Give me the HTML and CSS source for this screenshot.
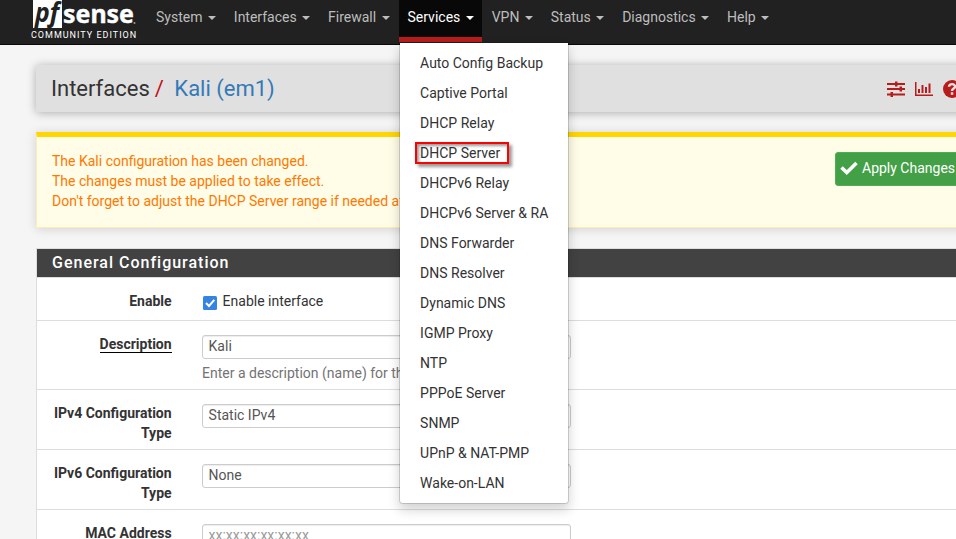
FILE: index.html
```html
<!DOCTYPE html>
<html lang="en">
<head>
<meta charset="utf-8">
<title>pfSense - Interfaces: Kali (em1)</title>
<link rel="stylesheet" href="styles.css">
</head>
<body>
<nav class="navbar">
  <a class="brand">
    <svg class="logo" width="106" height="29" viewBox="0 0 106 29">
      <rect x="2" y="0" width="29" height="28" fill="#fff"/>
      <text class="logo-pf" x="4" y="22" textLength="24" lengthAdjust="spacingAndGlyphs">pf</text>
      <text class="logo-sense" x="32" y="22.5" textLength="71" lengthAdjust="spacingAndGlyphs">sense</text>
      <circle cx="103.500" cy="23" r="1" fill="#999"/>
    </svg>
    <span class="edition">COMMUNITY EDITION</span>
  </a>
  <ul class="menu">
    <li>System <i class="caret"></i></li>
    <li>Interfaces <i class="caret"></i></li>
    <li>Firewall <i class="caret"></i></li>
    <li class="open">Services <i class="caret"></i>
      <ul class="dropdown">
        <li>Auto Config Backup</li>
        <li>Captive Portal</li>
        <li>DHCP Relay</li>
        <li class="marked">DHCP Server</li>
        <li>DHCPv6 Relay</li>
        <li>DHCPv6 Server &amp; RA</li>
        <li>DNS Forwarder</li>
        <li>DNS Resolver</li>
        <li>Dynamic DNS</li>
        <li>IGMP Proxy</li>
        <li>NTP</li>
        <li>PPPoE Server</li>
        <li>SNMP</li>
        <li>UPnP &amp; NAT-PMP</li>
        <li>Wake-on-LAN</li>
      </ul>
    </li>
    <li>VPN <i class="caret"></i></li>
    <li>Status <i class="caret"></i></li>
    <li>Diagnostics <i class="caret"></i></li>
    <li>Help <i class="caret"></i></li>
  </ul>
</nav>
<main class="container">
  <header class="page-header">
    <h1>Interfaces<span class="slash">/</span><a>Kali (em1)</a></h1>
    <div class="tools">
      <svg width="18" height="16" viewBox="0 0 18 16" fill="#b71c1c"><path d="M0 2h18v2H0zM0 7h18v2H0zM0 12.500h18v2H0zM8 .5h2.500v5H8zM12.500 5.500H15v5h-2.500zM3.500 11H6v5H3.500z"/></svg>
      <svg width="18" height="14" viewBox="0 0 18 14" fill="#b71c1c"><path d="M0 0h1.500v12.500H18V14H0zM3 7h2v4H3zM6.500 3h2v8h-2zM10 5h2v6h-2zM13.500 1.500h2V11h-2z"/></svg>
      <svg width="18" height="18" viewBox="0 0 18 18"><circle cx="9" cy="9" r="9" fill="#b71c1c"/><path d="M6 6.800C6 3 12.300 3.500 12 6.800C11.800 8.700 9 8.500 9 11" fill="none" stroke="#e0e0e0" stroke-width="2.400"/><path d="M7.800 12.300h2.500v2.500H7.800z" fill="#e0e0e0"/></svg>
    </div>
  </header>
  <section class="alert">
    <p>The Kali configuration has been changed.<br>The changes must be applied to take effect.<br>Don't forget to adjust the DHCP Server range if needed after applying.</p>
    <button class="apply"><svg width="18" height="14" viewBox="0 0 18 14"><path d="M1.500 6.500L6.800 11.500L16.500 2" fill="none" stroke="#fff" stroke-width="3.600"/></svg>Apply Changes</button>
  </section>
  <section class="panel">
    <h2>General Configuration</h2>
    <div class="row row-enable"><label>Enable</label><div class="check"><svg width="14" height="14" viewBox="0 0 14 14"><rect width="14" height="14" rx="1.500" fill="#3584e4"/><path d="M3 7L6 10L11.300 3.800" fill="none" stroke="#fff" stroke-width="2"/></svg>Enable interface</div></div>
    <div class="row row-desc"><label><span class="required">Description</span></label><div><div class="field">Kali</div><small>Enter a description (name) for the interface here.</small></div></div>
    <div class="row"><label>IPv4 Configuration Type</label><div class="field">Static IPv4</div></div>
    <div class="row"><label>IPv6 Configuration Type</label><div class="field">None</div></div>
    <div class="row"><label>MAC Address</label><div class="field placeholder">xx:xx:xx:xx:xx:xx</div></div>
  </section>
</main>
</body>
</html>
```
FILE: styles.css
```css
*, ::before, ::after { box-sizing: border-box; }
html { height: 100%; overflow: hidden; }
body {
  margin: 0;
  height: 100%;
  overflow: hidden;
  background: #f5f5f5;
  color: #333;
  font: 14px/20px Roboto, sans-serif;
}
ul { list-style: none; margin: 0; padding: 0; }
h1, h2, p { margin: 0; }

.navbar {
  display: flex;
  height: 45px;
  padding-left: 31px;
  background: #212121;
  border-bottom: 1px solid #080808;
}
.brand { width: 116.6px; display: flex; flex-direction: column; }
.logo { display: block; flex: none; }
.logo-pf { font: italic bold 26px "Noto Sans", sans-serif; fill: #212121; }
.logo-sense { font: bold 25px "Noto Sans", sans-serif; fill: #fff; stroke: #fff; stroke-width: .4px; }
.edition { color: #fff; font-size: 9px; line-height: 11px; padding-top: 1px; letter-spacing: 1px; white-space: nowrap; }
.menu { display: flex; height: 42px; }
.menu > li {
  position: relative;
  height: 42px;
  padding: 7px 8.45px 0;
  margin-right: 1px;
  color: #bdbdbd;
  white-space: nowrap;
}
.menu > .open { background: #080808; border-bottom: 5px solid #b71c1c; color: #fff; }
.caret {
  display: inline-block;
  margin-left: 2px;
  vertical-align: middle;
  border-top: 4px solid;
  border-left: 4px solid transparent;
  border-right: 4px solid transparent;
}
.dropdown {
  position: absolute;
  z-index: 5;
  top: 42px;
  left: 0;
  width: 170px;
  height: 462px;
  padding: 6px 0;
  background: #fff;
  background-clip: padding-box;
  border: 1px solid rgba(0, 0, 0, .15);
  border-radius: 0 0 4px 4px;
  box-shadow: 0 6px 12px rgba(0, 0, 0, .175);
  color: #333;
}
.dropdown li { position: relative; height: 30px; padding: 4px 20px; }
.marked::after {
  content: "";
  position: absolute;
  left: 15px;
  top: 3px;
  width: 94px;
  height: 22px;
  border: 2px solid #f00;
  box-shadow: 3px 3px 3px rgba(0, 0, 0, .4), inset 2px 2px 3px rgba(0, 0, 0, .4);
}

.container { width: 1110px; margin-left: 36px; padding-top: 20px; }
.page-header {
  display: flex;
  justify-content: space-between;
  height: 47px;
  padding: 0 15px;
  background: #e0e0e0;
  border-radius: 2px;
  box-shadow: 0 1px 10px rgba(0, 0, 0, .3);
}
.page-header h1 { font-size: 22px; font-weight: 400; line-height: 47px; white-space: nowrap; }
.slash { color: #c40f1a; margin: 0 11px 0 5px; }
.page-header a { color: #337ab7; margin-left: -.5px; }
.tools { display: flex; align-items: center; gap: 10px; width: 244px; flex: none; padding-top: 1px; }
.alert {
  display: flex;
  justify-content: space-between;
  height: 96px;
  margin-top: 20px;
  padding: 14px 15px 0;
  background: #fffde7;
  border: 1px solid #ffecb3;
  border-top: 5px solid #ffd600;
  box-shadow: 0 1px 10px rgba(0, 0, 0, .15);
  color: #ff7800;
}
.apply {
  display: flex;
  align-items: center;
  gap: 4px;
  width: 295px;
  height: 34px;
  margin-top: 1px;
  padding: 0 4px 2px;
  background: #43a047;
  border: 1px solid #4caf50;
  border-radius: 3px;
  color: #fff;
  font: inherit;
}
.panel { margin-top: 20px; background: #fff; border: 1px solid #ddd; }
.panel h2 {
  height: 29px;
  padding: 0 15px;
  background: #424242;
  border-bottom: 1px solid #ddd;
  color: #fff;
  font-size: 16px;
  font-weight: 500;
  line-height: 27px;
  letter-spacing: 1px;
}
.row {
  display: grid;
  grid-template-columns: 134.6px 369px;
  column-gap: 30.4px;
  align-items: start;
  height: 60px;
  padding-top: 13px;
  border-bottom: 1px solid #ddd;
}
.row label { font-weight: 700; text-align: right; }
.row .field { margin-top: 1px; }
.row-enable { height: 43px; }
.row-desc { height: 69px; }
.required { display: inline-block; height: 17px; line-height: 17px; border-bottom: 1px solid #000; }
.check { display: flex; gap: 5.6px; padding-left: 1px; }
.check svg { margin-top: 5px; }
.field {
  height: 24px;
  padding: 0 5.6px;
  border: 1px solid #ccc;
  border-radius: 3px;
  box-shadow: inset 0 1px 1px rgba(0, 0, 0, .075);
  color: #555;
  line-height: 20px;
}
.placeholder { color: #999; }
.row small { display: block; margin-top: 4px; font-size: 14px; color: #737373; white-space: nowrap; }
```
